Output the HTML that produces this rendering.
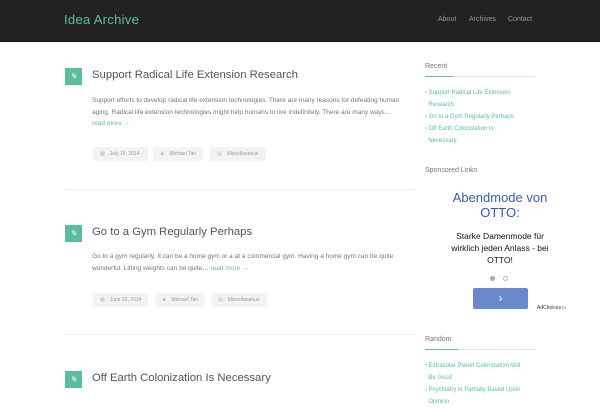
<!DOCTYPE html>
<html><head><style>
*{margin:0;padding:0;box-sizing:border-box}
body{width:600px;height:400px;overflow:hidden;background:#fff;font-family:"Liberation Sans",sans-serif;position:relative}
.hdr{position:absolute;left:0;top:0;width:600px;height:42px;background:#222;border-bottom:1px solid #111}
.logo{position:absolute;left:64px;top:12px;color:#5cc0a0;font-size:13px;letter-spacing:.3px}
.nav{position:absolute;top:16px;font-size:7px;color:#999}
.abs{position:absolute}
.ic{position:absolute;left:65px;width:17px;height:17px;background:#5cbf9c;color:#fff;font-size:8px;text-align:center;line-height:17px;font-style:italic}
.t{position:absolute;left:92px;font-size:11.3px;color:#555}
.p{position:absolute;left:92px;width:314px;font-size:6.5px;color:#777;line-height:11.5px}
.g{color:#5cbf9c}
.m{position:absolute;height:14px;background:#f3f3f3;font-size:5px;color:#999;line-height:14px;padding-left:7px}
.m b{font-weight:normal;color:#bbb;margin-right:5px}
.hr{position:absolute;left:65px;width:350px;height:1px;background:#eee}
.sh{position:absolute;left:425px;font-size:7px;color:#777}
.sl{position:absolute;left:425px;width:110px;height:1px;background:#e5e5e5}
.sl i{display:block;width:28px;height:1px;background:#5cbf9c}
.li{position:absolute;left:425px;font-size:6px;color:#5cbf9c;line-height:12px;width:110px}
</style></head><body>
<div class="hdr"><div class="logo">Idea Archive</div>
<div class="nav" style="left:438px">About</div><div class="nav" style="left:469px">Archives</div><div class="nav" style="left:508px">Contact</div></div>

<div class="ic" style="top:68px">✎</div>
<div class="t" style="top:69px">Support Radical Life Extension Research</div>
<div class="p" style="top:95px">Support efforts to develop radical life extension technologies. There are many reasons for defeating human aging. Radical life extension technologies might help humans to live indefinitely. There are many ways… <span class="g">read more →</span></div>
<div class="m" style="left:93px;top:147px;width:55px"><b>▦</b>July 19, 2014</div>
<div class="m" style="left:153px;top:147px;width:50px"><b>♟</b>Michael Tan</div>
<div class="m" style="left:210px;top:147px;width:56px"><b>▤</b>Miscellaneous</div>
<div class="hr" style="top:189px"></div>

<div class="ic" style="top:225px">✎</div>
<div class="t" style="top:226px">Go to a Gym Regularly Perhaps</div>
<div class="p" style="top:251px">Go to a gym regularly. It can be a home gym or a at a commercial gym. Having a home gym can be quite wonderful. Lifting weights can be quite… <span class="g">read more →</span></div>
<div class="m" style="left:93px;top:293px;width:55px"><b>▦</b>June 22, 2014</div>
<div class="m" style="left:155px;top:293px;width:50px"><b>♟</b>Michael Tan</div>
<div class="m" style="left:211px;top:293px;width:56px"><b>▤</b>Miscellaneous</div>
<div class="hr" style="top:334px"></div>

<div class="ic" style="top:371px">✎</div>
<div class="t" style="top:372px">Off Earth Colonization Is Necessary</div>

<div class="sh" style="top:63px">Recent</div>
<div class="sl" style="top:76px"><i></i></div>
<div class="li" style="top:87px">› Support Radical Life Extension<br>&nbsp;&nbsp;Research<br>› Go to a Gym Regularly Perhaps<br>› Off Earth Colonization Is<br>&nbsp;&nbsp;Necessary</div>
<div class="sh" style="top:167px">Sponsored Links</div>
<div class="abs" style="left:425px;top:190px;width:150px;text-align:center;color:#3a5aa8;font-size:13px;line-height:15px">Abendmode von<br>OTTO:</div>
<div class="abs" style="left:425px;top:230px;width:150px;text-align:center;color:#111;font-size:8.5px;line-height:12px">Starke Damenmode für<br>wirklich jeden Anlass - bei<br>OTTO!</div>
<div class="abs" style="left:490px;top:276px;width:5px;height:5px;border-radius:50%;background:#aaa"></div>
<div class="abs" style="left:503px;top:276px;width:5px;height:5px;border-radius:50%;border:1px solid #bbb"></div>
<div class="abs" style="left:473px;top:288px;width:55px;height:21px;background:#6a88cc;border-radius:2px;color:#fff;text-align:center;font-size:12px;line-height:20px">›</div>
<div class="abs" style="left:537px;top:305px;font-size:5px;color:#333">AdChoices ▷</div>
<div class="sh" style="top:336px">Random</div>
<div class="sl" style="top:349px"><i style="width:33px"></i></div>
<div class="li" style="top:360px">› Extrasolar Planet Colonization Will<br>&nbsp;&nbsp;Be Good<br>› Psychiatry Is Partially Based Upon<br>&nbsp;&nbsp;Opinion</div>
</body></html>
